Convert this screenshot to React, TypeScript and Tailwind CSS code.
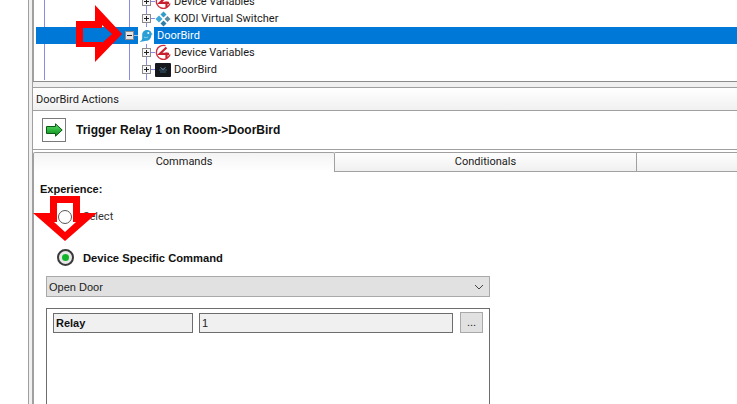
const font = { fontFamily: '"Liberation Sans", Arial, sans-serif' };
const ui = { fontFamily: 'Roboto, "Liberation Sans", sans-serif', fontSize: 11 };

function Expander({ open }: { open?: boolean }) {
  return (
    <span className={`relative z-10 flex h-[9px] w-[9px] shrink-0 items-center justify-center border border-[#8a8a8a] ${open ? "bg-[#e4e4e4]" : "bg-[#f6f6f6]"}`}>
      <span className="absolute h-px w-[5px] bg-[#222]" />
      {!open && <span className="absolute h-[5px] w-px bg-[#222]" />}
    </span>
  );
}

function FourIcon() {
  return (
    <svg width="16" height="17" viewBox="0 0 16 17" className="shrink-0">
      <path d="M10.500 1.700 A7 7 0 1 0 15 10.500" fill="none" stroke="#cf2f3c" strokeWidth="1.4" />
      <path d="M11.500 3.500 L4.800 9.800 H14" fill="none" stroke="#c8202e" strokeWidth="2.200" />
      <path d="M11.500 8.500 V14.500" fill="none" stroke="#c8202e" strokeWidth="2.200" />
    </svg>
  );
}

function KodiIcon() {
  return (
    <svg width="16" height="16" viewBox="0 0 16 16" className="shrink-0">
      <path d="M8.500 .5 L11.500 3.500 L8.500 6.500 L5.500 3.500Z" fill="#2f9ccb" />
      <path d="M4 4.500 L7.500 8 L4 11.500 L.5 8Z" fill="#3fa9d8" />
      <path d="M12.500 5 L15.500 8 L12.500 11 L9.500 8Z" fill="#5c8aa0" />
      <path d="M8.500 9.500 L11.500 12.500 L8.500 15.500 L5.500 12.500Z" fill="#2d7fa8" />
    </svg>
  );
}

function BirdIcon() {
  return (
    <span className="flex h-[17px] w-[16px] shrink-0 items-center justify-center bg-white">
      <svg width="14" height="14" viewBox="0 0 14 14">
        <path d="M.5 12.500 C2 12 3 11 3.200 9.500 L3.200 6 C3.200 2.800 5.500 1 8.200 1 C10.700 1 12.300 2.500 12.500 4.200 L13.800 5 L12.400 5.700 C12.300 9 10.500 11.500 7.500 11.800 C5 12 3 13.300 .5 12.500Z" fill="#2a9fd6" />
        <circle cx="9.300" cy="4" r="1" fill="#fff" />
        <path d="M5 8 C6.500 9 8 8.800 9 7.800" stroke="#8ad0ef" strokeWidth="1" fill="none" />
      </svg>
    </span>
  );
}

function ScreenIcon() {
  return (
    <svg width="16" height="16" viewBox="0 0 16 16" className="shrink-0">
      <rect x="0" y="1" width="16" height="14" rx="1" fill="#15181c" />
      <path d="M4 8h8M5 10h6" stroke="#3b5a72" strokeWidth="1" />
      <path d="M5.500 5.500l2.500 2 2.500-2" stroke="#6f93ab" strokeWidth="1" fill="none" />
    </svg>
  );
}

function TreeRow({ label, icon, selected, open, indent }: { label: string; icon: React.ReactNode; selected?: boolean; open?: boolean; indent: string }) {
  return (
    <div className={`flex h-[17px] items-center ${indent} ${selected ? "bg-[#0078d7] text-white" : "text-[#1a1a1a]"}`} style={ui}>
      <Expander open={open} />
      <span className={selected ? "h-px w-[4px] bg-[#9fc6ea]" : "h-px w-[4px] bg-[#8a8ae8]"} />
      {icon}
      <span className="ml-[3px] whitespace-nowrap pt-[1px]">{label}</span>
    </div>
  );
}

export default function App() {
  return (
    <div className="relative flex h-[404px] w-[737px] overflow-hidden bg-white text-[12px] leading-[14px]" style={font}>
      <div className="w-[28px] shrink-0 bg-white" />
      <div className="w-[5px] shrink-0 border-x border-[#a0a0a0] bg-[#f0f0f0]" />
      <div className="flex min-w-0 flex-1 flex-col">
        {/* tree */}
        <div className="relative h-[81px] shrink-0 overflow-hidden border-l border-[#a0a0a0] pl-[2px]">
          <span className="absolute left-[10px] top-0 h-[80px] w-px bg-[#8a8ae8]" />
          <span className="absolute left-[95px] top-0 h-[80px] w-px bg-[#8a8ae8]" />
          <span className="absolute left-[112px] top-0 h-[80px] w-px bg-[#8a8ae8]" />
          <div className="relative -mt-[7px]">
            <TreeRow label="Device Variables" icon={<FourIcon />} indent="pl-[106px]" />
            <TreeRow label="KODI Virtual Switcher" icon={<KodiIcon />} indent="pl-[106px]" />
            <TreeRow label="DoorBird" icon={<BirdIcon />} indent="pl-[89px]" selected open />
            <TreeRow label="Device Variables" icon={<FourIcon />} indent="pl-[106px]" />
            <TreeRow label="DoorBird" icon={<ScreenIcon />} indent="pl-[106px]" />
          </div>
        </div>
        {/* splitter */}
        <div className="h-[7px] shrink-0 border-y border-[#a0a0a0] border-t-[#8c8c8c] bg-[#f0f0f0]" />
        {/* header */}
        <div className="flex h-[23px] shrink-0 items-center border-b border-[#a0a0a0] bg-gradient-to-b from-[#ffffff] to-[#f0f0f0] pl-[3px] pt-[2px] text-[#1a1a1a]" style={ui}>
          DoorBird Actions
        </div>
        {/* action title */}
        <div className="flex h-[39px] shrink-0 items-center gap-[10px] border-b border-[#a0a0a0] pl-[9px]">
          <span className="flex h-[24px] w-[24px] items-center justify-center border border-[#7a7a7a] bg-white">
            <svg width="17" height="14" viewBox="0 0 17 14">
              <defs>
                <linearGradient id="g" x1="0" y1="0" x2="0" y2="1">
                  <stop offset="0" stopColor="#5fe06c" />
                  <stop offset="1" stopColor="#048a16" />
                </linearGradient>
              </defs>
              <path d="M.5 3.500h9V.8L16.200 7 9.500 13.200V10.500h-9Z" fill="url(#g)" stroke="#0a5c14" strokeWidth="1" />
            </svg>
          </span>
          <span className="text-[12px] font-bold text-[#111]">Trigger Relay 1 on Room-&gt;DoorBird</span>
        </div>
        {/* tabs */}
        <div className="mt-[2px] flex h-[20px] shrink-0 border-b border-[#a0a0a0] text-[#1a1a1a]" style={ui}>
          <div className="flex h-[20px] w-[302px] shrink-0 items-center justify-center rounded-t-[2px] border border-b-0 border-[#a0a0a0] bg-gradient-to-b from-[#f4f4f4] to-[#ffffff] pb-[1px]">Commands</div>
          <div className="flex h-[19px] w-[302px] shrink-0 items-center justify-center border-r border-t border-[#a0a0a0] bg-gradient-to-b from-[#ffffff] to-[#f0f0f0]">Conditionals</div>
          <div className="h-[19px] flex-1 border-t border-[#a0a0a0] bg-gradient-to-b from-[#ffffff] to-[#f0f0f0]" />
        </div>
        {/* body */}
        <div className="flex min-h-0 flex-1 flex-col border-l border-[#a0a0a0] pl-[6px]">
          <div className="mt-[10px] font-bold text-[#111]" style={{ fontSize: 11 }}>Experience:</div>
          <div className="ml-[18px] mt-[13px] flex h-[15px] items-center gap-[11px] text-[#333]" style={ui}>
            <span className="h-[14px] w-[14px] shrink-0 rounded-full border border-[#555] bg-white" />
            <span>Select</span>
          </div>
          <div className="ml-[17px] mt-[25px] flex h-[17px] items-center gap-[9px] font-bold text-[#111]" style={{ fontSize: 11.2 }}>
            <span className="flex h-[17px] w-[17px] shrink-0 items-center justify-center rounded-full border-2 border-[#3a3a3a] bg-[#e8e8e8]">
              <span className="h-[7px] w-[7px] rounded-full bg-[#12b52a]" />
            </span>
            <span>Device Specific Command</span>
          </div>
          <div className="ml-[6px] mt-[10px] flex h-[21px] w-[444px] shrink-0 items-center justify-between border border-[#a9a9a9] bg-[#e1e1e1] pl-[2px] pr-[5px] text-[#222]" style={{ fontSize: 11 }}>
            Open Door
            <svg width="10" height="6" viewBox="0 0 10 6"><path d="M1 1l4 4 4-4" fill="none" stroke="#444" strokeWidth="1" /></svg>
          </div>
          <div className="ml-[6px] mt-[11px] flex w-[444px] flex-1 items-start gap-[6px] border-x border-t border-[#6d6d6d] pl-[6px] pr-[6px] pt-[4px]">
            <div className="flex h-[20px] w-[140px] items-center border border-[#6d6d6d] bg-[#f0f0f0] pl-[2px] font-bold text-[#111]" style={{ fontSize: 11 }}>Relay</div>
            <div className="flex h-[20px] flex-1 items-center border border-[#6d6d6d] bg-[#f0f0f0] pl-[2px] text-[#222]" style={{ fontSize: 11 }}>1</div>
            <div className="-mt-[1px] ml-[1px] flex h-[21px] w-[23px] items-center justify-center border border-[#a9a9a9] bg-[#e1e1e1] pb-[2px] text-[#222]" style={{ fontSize: 11 }}>...</div>
          </div>
        </div>
      </div>
      {/* annotation arrows */}
      <svg width="737" height="404" className="pointer-events-none absolute left-0 top-0 z-20">
        <path fillRule="evenodd" fill="#fe0000" d="M76 21H95V5L122 34 95 62V47H76ZM83 28V42H102V43L112 34 102 25V28Z" />
        <path fillRule="evenodd" fill="#fe0000" d="M50 196H80V213H97L65 241 33 213H50ZM57 203V222H54L65 232 76 222H73V203Z" />
      </svg>
    </div>
  );
}
